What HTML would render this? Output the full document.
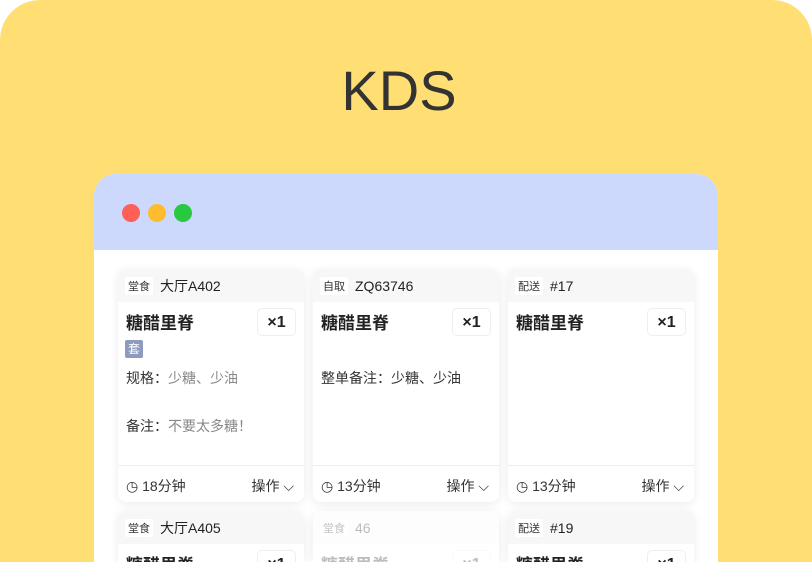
<!DOCTYPE html><html><head><meta charset="utf-8"><style>
*{margin:0;padding:0;box-sizing:border-box}
html,body{width:812px;height:562px;overflow:hidden;background:#fff;font-family:"Liberation Sans","Noto Sans CJK SC",sans-serif}
.wrap{position:relative;width:812px;height:562px;overflow:hidden}
.bg{position:absolute;left:0;top:0;width:812px;height:562px;background:#ffdf74;border-radius:40px 40px 0 0}
h1{position:absolute;left:0;width:798px;top:58px;text-align:center;font-size:56px;font-weight:400;color:#333}
.win{position:absolute;left:94px;top:174px;width:624px;height:388px;background:#fff;border-radius:22px 22px 0 0;overflow:hidden}
.bar{height:76px;background:#cdd8fd;position:relative}
.dot{position:absolute;top:30px;width:18px;height:18px;border-radius:50%}
.card{position:absolute;width:186px;height:233px;background:#fff;border-radius:8px;box-shadow:0 2px 10px rgba(0,0,0,.08);overflow:hidden}
.card.b{height:51px;border-radius:8px 8px 0 0}
.hd{height:33px;background:#f7f7f7;display:flex;align-items:center;padding-left:7px;font-size:14px;color:#222}
.tag{background:#fff;font-size:11px;padding:1px 3px;margin-right:7px;border-radius:2px;color:#333}
.name{position:absolute;left:8px;top:40px;font-size:17px;font-weight:bold;color:#222}
.x{position:absolute;right:8px;top:39px;width:39px;height:28px;border:1px solid #eee;border-radius:5px;text-align:center;line-height:27px;font-size:16px;font-weight:bold;color:#222}
.t{position:absolute;left:8px;font-size:14px;color:#333}
.t span{color:#888}
.ft{position:absolute;left:0;right:0;top:196px;border-top:1px solid #eee;height:37px;font-size:14px;color:#333}
.ft .l{position:absolute;left:8px;top:10px}
.ft .r{position:absolute;right:10px;top:10px}
.fade{opacity:.3}
</style></head><body><div class="wrap">
<div class="bg"></div>
<h1>KDS</h1>
<div class="win">
<div class="bar"><div class="dot" style="left:28px;background:#fe5f57"></div><div class="dot" style="left:54px;background:#febc2e"></div><div class="dot" style="left:80px;background:#28c840"></div></div>
</div>
<div class="card" style="left:118px;top:269px"><div class="hd"><span class="tag">堂食</span>大厅A402</div>
<div class="name">糖醋里脊</div><div class="x">×1</div>
<div style="position:absolute;left:7px;top:71px;width:18px;height:18px;background:#8c9bbe;color:#fff;font-size:12px;text-align:center;line-height:18px;border-radius:2px">套</div>
<div class="t" style="top:99px">规格：<span>少糖、少油</span></div>
<div class="t" style="top:147px">备注：<span>不要太多糖！</span></div>
<div class="ft"><span class="l">◷ 18分钟</span><span class="r">操作 ⌵</span></div></div>
<div class="card" style="left:313px;top:269px"><div class="hd"><span class="tag">自取</span>ZQ63746</div>
<div class="name">糖醋里脊</div><div class="x">×1</div>
<div class="t" style="top:99px">整单备注：少糖、少油</div>
<div class="ft"><span class="l">◷ 13分钟</span><span class="r">操作 ⌵</span></div></div>
<div class="card" style="left:508px;top:269px"><div class="hd"><span class="tag">配送</span>#17</div>
<div class="name">糖醋里脊</div><div class="x">×1</div>
<div class="ft"><span class="l">◷ 13分钟</span><span class="r">操作 ⌵</span></div></div>
<div class="card b" style="left:118px;top:511px"><div class="hd"><span class="tag">堂食</span>大厅A405</div>
<div class="name">糖醋里脊</div><div class="x">×1</div></div>
<div class="card b" style="left:313px;top:511px"><div class="fade"><div class="hd"><span class="tag">堂食</span>46</div>
<div class="name">糖醋里脊</div><div class="x">×1</div></div></div>
<div class="card b" style="left:508px;top:511px"><div class="hd"><span class="tag">配送</span>#19</div>
<div class="name">糖醋里脊</div><div class="x">×1</div></div>
</div></body></html>
